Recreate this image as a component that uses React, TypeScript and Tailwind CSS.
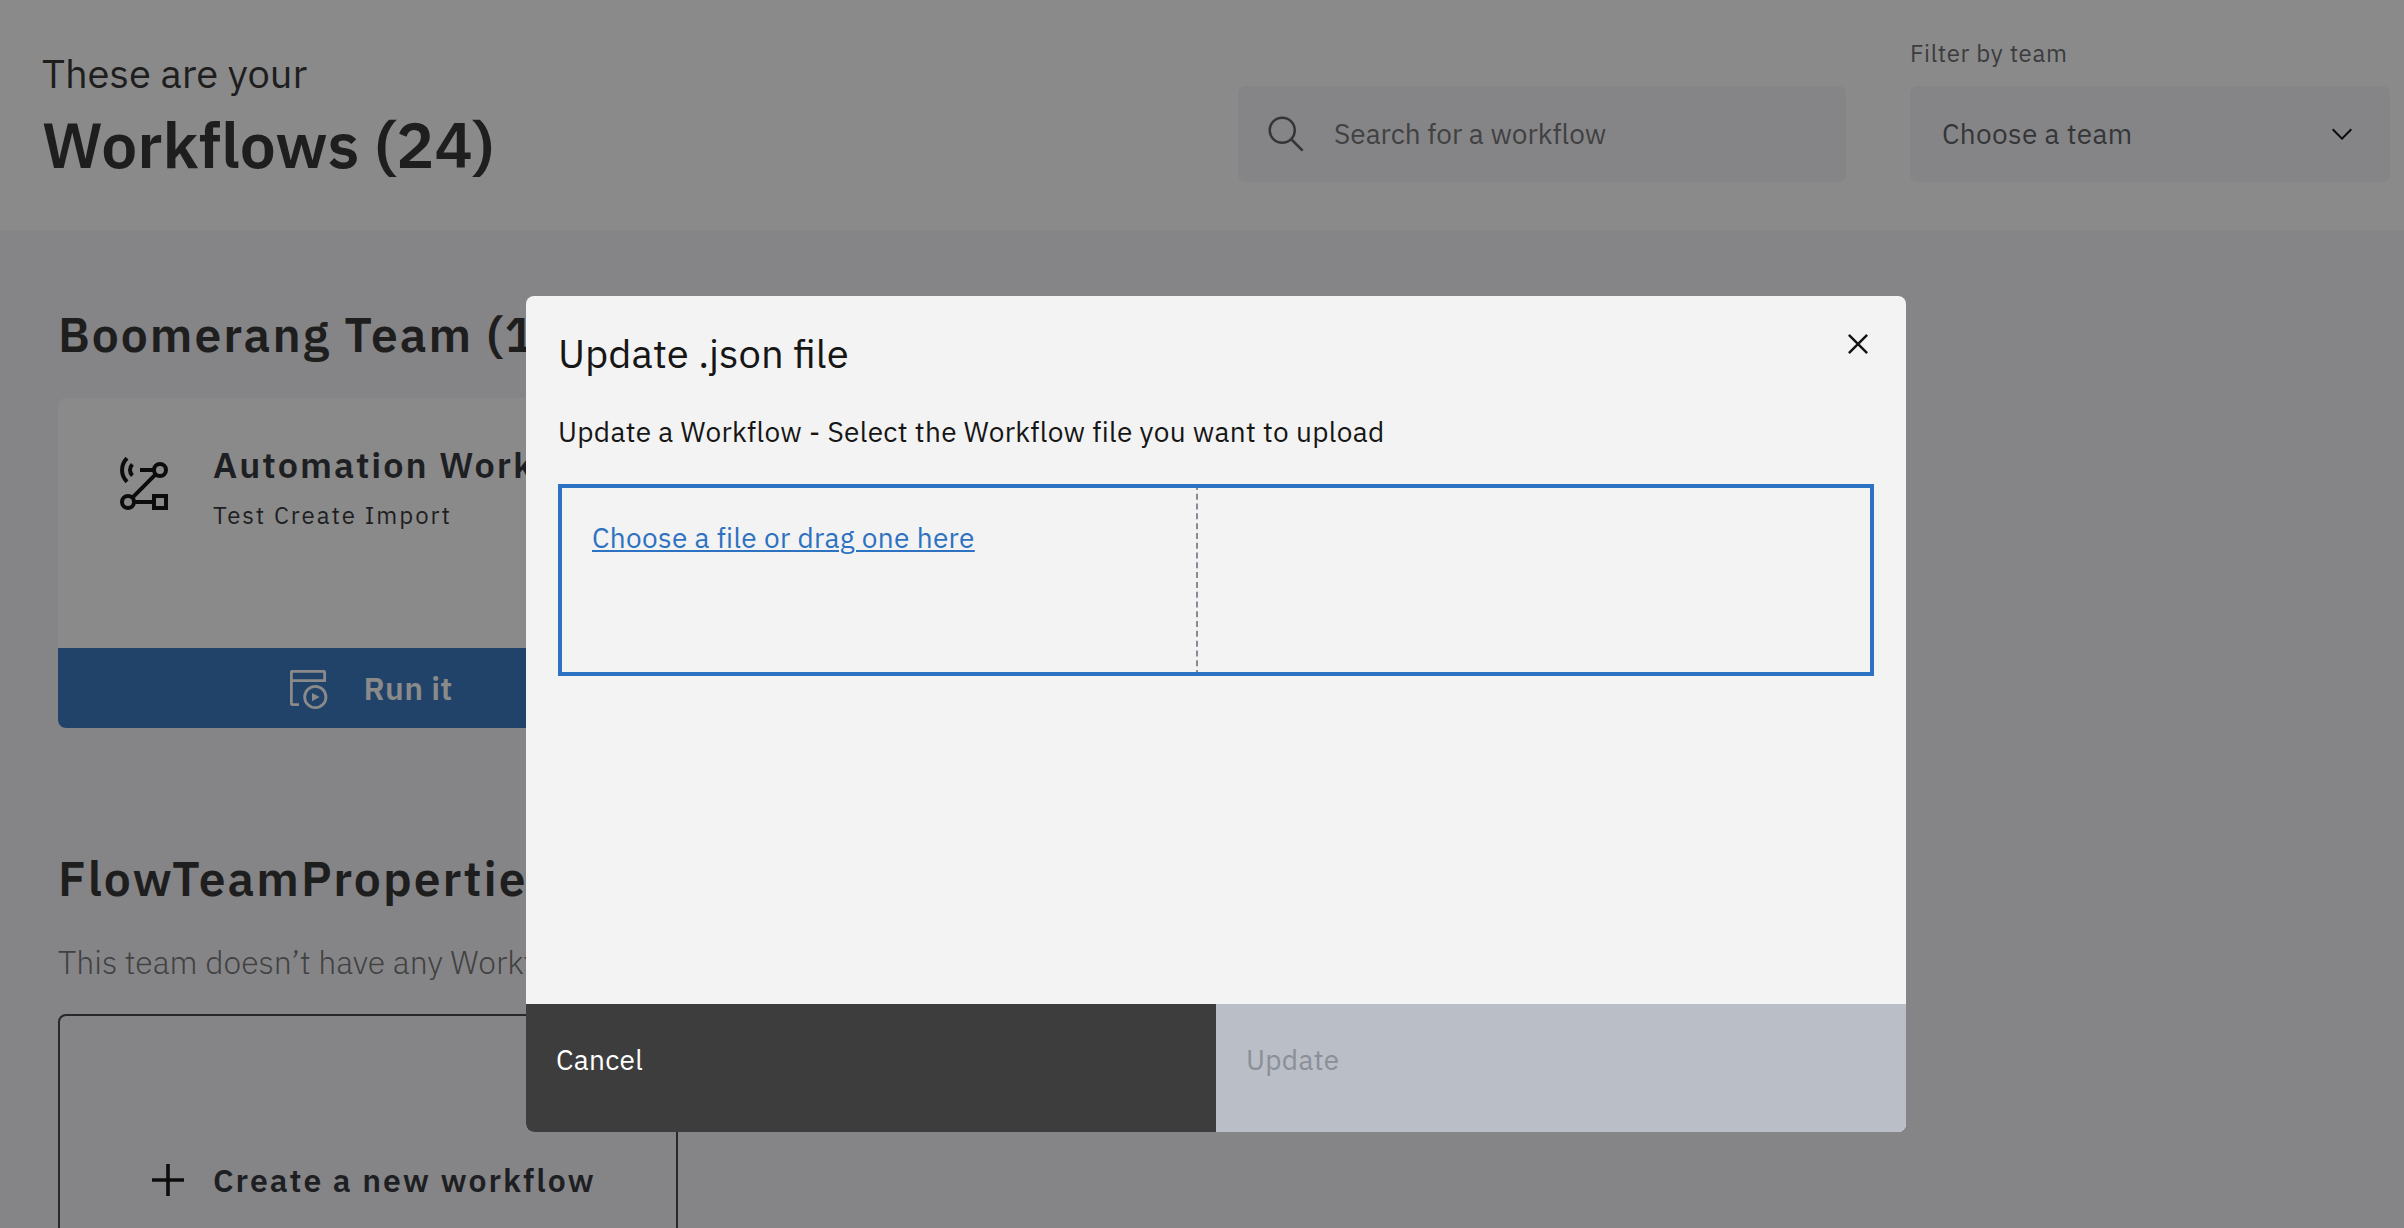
import React from "react";

function SearchIcon() {
  return (
    <svg className="size-10 shrink-0" viewBox="0 0 16 16" fill="none" stroke="#353536">
      <circle cx="6.5" cy="6.5" r="5" />
      <path d="M10.3 10.3L14.65 14.65" />
    </svg>
  );
}

function ChevronDown() {
  return (
    <svg className="size-8 shrink-0" viewBox="0 0 16 16" fill="#0c0c0c">
      <path d="M8 11L3 6 3.7 5.3 8 9.6 12.3 5.3 13 6z" />
    </svg>
  );
}

function CloseIcon() {
  return (
    <svg className="size-10" viewBox="0 0 32 32" fill="#161616">
      <path d="M24 9.4L22.6 8 16 14.6 9.4 8 8 9.4 14.6 16 8 22.6 9.4 24 16 17.4 22.6 24 24 22.6 17.4 16 24 9.4z" />
    </svg>
  );
}

function FlowIcon() {
  return (
    <svg className="h-[60px] w-[60px] shrink-0" viewBox="0 0 60 60" fill="none" stroke="#0c0c0c" strokeWidth="4">
      <circle cx="44" cy="16" r="6" />
      <circle cx="12" cy="48" r="6" />
      <rect x="38" y="42" width="12" height="12" />
      <path d="M24 16H38M18 48H38M39.8 20.2L16.2 43.8" />
      <path d="M11 4.2C4.4 11 4.4 21 11 27.8" />
      <path d="M16.4 10.4C13.2 13.6 13.2 18.4 16.4 21.6" />
    </svg>
  );
}

function RunIcon() {
  return (
    <svg className="size-10 shrink-0" viewBox="0 0 40 40" fill="none" stroke="#8a8a8a" strokeWidth="2.8">
      <path d="M9 34.65H2.35Q1.35 34.65 1.35 33.65V2.35Q1.35 1.35 2.35 1.35H33.65Q34.65 1.35 34.65 2.35V10.65H1.35" />
      <circle cx="25.3" cy="27" r="10.65" />
      <path d="M22 23V31.3L29.6 27Z" fill="#8a8a8a" stroke="none" />
    </svg>
  );
}

function PlusIcon() {
  return (
    <svg className="size-8 shrink-0" viewBox="0 0 32 32" stroke="#0c0c0c" strokeWidth="3.6">
      <path d="M16 0V32M0 16H32" />
    </svg>
  );
}

function Header() {
  return (
    <header className="flex h-[230px] justify-between bg-[#8a8a8a] pr-[14px] pl-[42px]">
      <div className="pt-12">
        <p className="text-[40px] leading-[50px]">These are your</p>
        <h1 className="mt-1.5 text-[64px] leading-[80px] font-semibold">Workflows (24)</h1>
      </div>
      <div className="flex items-end gap-16 pb-12">
        <div className="flex h-24 w-[608px] rounded-lg bg-[#858587] pt-7 pl-7">
          <SearchIcon />
          <span className="mt-px ml-7 text-[28px] leading-[37px] text-[#414142]">Search for a workflow</span>
        </div>
        <div className="w-[480px]">
          <label className="mb-[17px] block text-2xl leading-8 tracking-[0.64px] text-[#3c3c3e]">Filter by team</label>
          <div className="flex h-24 justify-between rounded-lg bg-[#858587] px-8">
            <span className="mt-[29px] text-[28px] leading-[37px] tracking-[0.32px] text-[#353637]">Choose a team</span>
            <span className="mt-8">
              <ChevronDown />
            </span>
          </div>
        </div>
      </div>
    </header>
  );
}

function WorkflowCard() {
  return (
    <div className="mt-[34px] flex h-[330px] w-[620px] flex-col overflow-hidden rounded-lg bg-[#8a8a8a]">
      <div className="flex flex-1 pt-[43px] pl-[58px] text-[#1e1f23]">
        <span className="mt-[13px]">
          <FlowIcon />
        </span>
        <div className="ml-[37px] whitespace-nowrap">
          <h3 className="text-4xl leading-[47px] font-semibold tracking-[2px]">Automation Workflow</h3>
          <p className="mt-[11px] text-2xl leading-8 tracking-[2px]">Test Create Import</p>
        </div>
      </div>
      <div className="flex h-20 bg-[#224369] pt-[19px] pl-[232px] text-[#8a8a8a]">
        <span className="mt-[3px]">
          <RunIcon />
        </span>
        <span className="ml-[33.5px] text-[32px] leading-[42px] font-semibold tracking-[0.32px]">Run it</span>
      </div>
    </div>
  );
}

function Teams() {
  return (
    <main className="flex flex-1 flex-col overflow-hidden pl-[58px]">
      <section className="pt-[74px]">
        <h2 className="text-5xl leading-[60px] font-semibold tracking-[2px]">Boomerang Team (1)</h2>
        <WorkflowCard />
      </section>
      <section className="mt-[120px]">
        <h2 className="text-5xl leading-[60px] font-semibold tracking-[2px]">FlowTeamProperties</h2>
        <p className="mt-[33px] text-[32px] leading-[42px] font-light text-[#414142]">
          This team doesn’t have any Workflows
        </p>
        <div className="mt-[31px] flex h-[330px] w-[620px] rounded-lg border-2 border-[#28282a] pt-[143px] pl-[92px] text-[#1e1f23]">
          <span className="mt-[5px]">
            <PlusIcon />
          </span>
          <span className="ml-[29px] text-[32px] leading-[42px] font-semibold tracking-[2px]">
            Create a new workflow
          </span>
        </div>
      </section>
    </main>
  );
}

function UploadModal() {
  return (
    <div
      role="dialog"
      className="absolute top-[296px] left-[526px] flex h-[836px] w-[1380px] flex-col overflow-hidden rounded-lg bg-[#f3f3f3] text-[#161616]"
    >
      <div className="flex-1 px-8 pt-8">
        <h2 className="text-[40px] leading-[50px]">Update .json file</h2>
        <p className="mt-[35px] text-[28px] leading-[37px] tracking-[0.32px]">
          Update a Workflow - Select the Workflow file you want to upload
        </p>
        <div className="mt-[34px] flex h-48 outline-4 -outline-offset-4 outline-[#2d72c1] outline-solid">
          <div className="w-[638px] pt-[35px] pl-[34px]">
            <a className="text-[28px] leading-[37px] tracking-[0.32px] text-[#2d72c1] underline decoration-2 underline-offset-[2px]">
              Choose a file or drag one here
            </a>
          </div>
          <div className="flex-1 border-l-2 border-dashed border-[#878d96]" />
        </div>
      </div>
      <button className="absolute top-7 right-7" aria-label="Close">
        <CloseIcon />
      </button>
      <div className="grid h-32 grid-cols-2 text-[28px] leading-[37px] tracking-[0.32px]">
        <button className="flex bg-[#3d3d3d] pt-[37px] pl-[30px] text-white">Cancel</button>
        <button className="flex bg-[#b9bec7] pt-[37px] pl-[30px] text-[#8b8f97]">Update</button>
      </div>
    </div>
  );
}

export default function App() {
  return (
    <div className="relative flex h-screen flex-col overflow-hidden bg-[#858587] font-['IBM_Plex_Sans',Roboto,sans-serif] text-[#1e1e1e] antialiased">
      <Header />
      <Teams />
      <UploadModal />
    </div>
  );
}
